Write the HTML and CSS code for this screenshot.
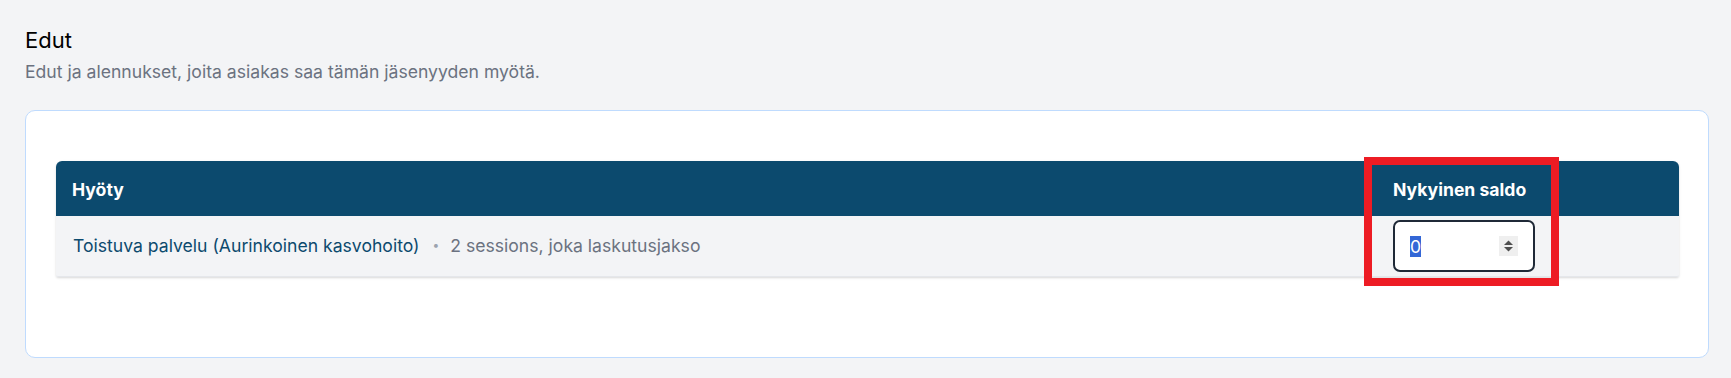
FILE: index.html
```html
<!DOCTYPE html>
<html lang="fi">
<head>
<meta charset="utf-8">
<title>Edut</title>
<link rel="stylesheet" href="styles.css">
</head>
<body>
<main class="page">
  <header class="section-head">
    <h2 class="section-title">Edut</h2>
    <p class="section-desc">Edut ja alennukset, joita asiakas saa tämän jäsenyyden myötä.</p>
  </header>
  <section class="card">
    <div class="table">
      <div class="thead">
        <div class="th">Hyöty</div>
        <div class="th th-balance">Nykyinen saldo</div>
      </div>
      <div class="tr">
        <div class="td benefit">
          <span class="benefit-name">Toistuva palvelu (Aurinkoinen kasvohoito)</span>
          <span class="sep">•</span>
          <span class="benefit-meta">2 sessions, joka laskutusjakso</span>
        </div>
        <div class="td td-balance">
          <div class="num-input" role="spinbutton" aria-valuenow="0">
            <span class="num-value">0</span>
            <span class="spinner">
              <svg width="19" height="20" viewBox="0 0 19 20" aria-hidden="true">
                <rect width="19" height="20" fill="#efefef"/>
                <path d="M5 9 L9.5 4.5 L14 9 Z" fill="#4f4f4f"/>
                <path d="M5 11 L9.5 15.5 L14 11 Z" fill="#4f4f4f"/>
              </svg>
            </span>
          </div>
        </div>
      </div>
      <div class="highlight" aria-hidden="true"></div>
    </div>
  </section>
</main>
</body>
</html>
```

FILE: styles.css
```css
* { box-sizing: border-box; }

html, body {
  margin: 0;
  padding: 0;
  background: #f3f4f6;
}

body {
  font-family: Inter, "Noto Sans", "Liberation Sans", sans-serif;
  width: 1731px;
  height: 378px;
  overflow: hidden;
}

.page {
  padding: 24px 22px 0 25px;
}

.section-head {
  margin: 0 0 25px 0;
}

.section-title {
  margin: 0;
  font-size: 22px;
  line-height: 33px;
  font-weight: 400;
  color: #000;
}

.section-desc {
  margin: 2px 0 0 0;
  font-size: 17.6px;
  line-height: 26.4px;
  color: #6b7280;
}

.card {
  background: #fff;
  border: 1px solid #bfdbfe;
  border-radius: 10px;
  padding: 50px 29px 80px 30px;
}

.table {
  position: relative;
  border-radius: 6px 6px 2px 2px;
  box-shadow: 0 1px 3px rgba(0, 0, 0, 0.1), 0 1px 2px rgba(0, 0, 0, 0.06);
}

.thead {
  display: grid;
  grid-template-columns: 1fr 302px;
  background: #0c4a6e;
  border-radius: 6px 6px 0 0;
}

.th {
  padding: 15px 16px 13px 16px;
  font-size: 17.6px;
  line-height: 27px;
  font-weight: 700;
  color: #fff;
}

.tr {
  display: grid;
  grid-template-columns: 1fr 302px;
  align-items: center;
  background: #f3f4f6;
  border-bottom: 1px solid #e5e7eb;
  border-radius: 0 0 2px 2px;
  height: 61px;
}

.td {
  padding: 0 16px;
  font-size: 17.6px;
  line-height: 26.4px;
}

.benefit {
  display: flex;
  align-items: center;
  padding-left: 17px;
}

.benefit-name {
  color: #0c4a6e;
}

.sep {
  color: #9ca3af;
  font-size: 12px;
  line-height: 12px;
  margin: 0 11px 0 13px;
  position: relative;
  top: -1px;
}

.benefit-meta {
  color: #6b7280;
}

.num-input {
  width: 142px;
  height: 52px;
  border: 2px solid #1f2937;
  border-radius: 7px;
  background: #fff;
  display: flex;
  align-items: center;
  justify-content: space-between;
  padding: 0 15px 0 15px;
}

.num-value {
  background: #3367d6;
  color: #fff;
  font-size: 17.6px;
  line-height: 21px;
  height: 21px;
  display: inline-block;
}

.spinner {
  display: flex;
  width: 19px;
  height: 20px;
}

.highlight {
  position: absolute;
  left: 1308px;
  top: -4px;
  width: 195px;
  height: 129px;
  border: 8px solid #ed1c24;
  pointer-events: none;
}
```
